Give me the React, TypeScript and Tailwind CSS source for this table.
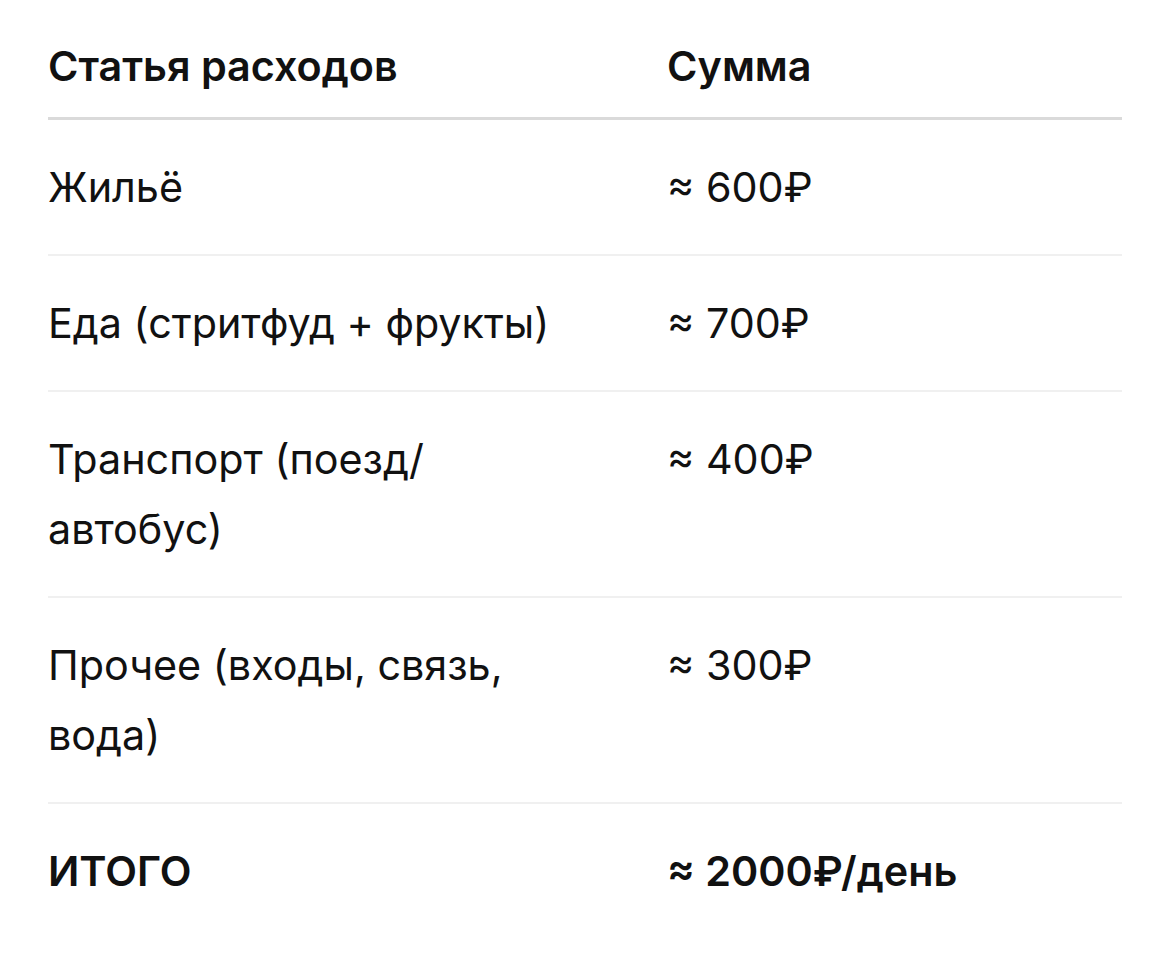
import { Fragment } from 'react';

const rows = [
  { item: 'Жильё', sum: '≈ 600₽' },
  { item: 'Еда (стритфуд + фрукты)', sum: '≈ 700₽' },
  { item: 'Транспорт (поезд/автобус)', sum: '≈ 400₽' },
  { item: 'Прочее (входы, связь, вода)', sum: '≈ 300₽' },
];

// allow a line break after a slash, the way the reference wraps "поезд/"
function withBreaks(text: string) {
  const parts = text.split('/');
  return parts.map((part, i) => (
    <Fragment key={i}>
      {part}
      {i < parts.length - 1 && (
        <>
          /<wbr />
        </>
      )}
    </Fragment>
  ));
}

export default function App() {
  return (
    <div className="min-h-[958px] bg-white px-[48px] pt-[16px] text-[#111111] font-['Inter','Noto_Sans',sans-serif] text-[41.3px] leading-[70px]">
      <div className="w-[1074px]">
        {/* Header */}
        <div className="grid grid-cols-[619px_1fr] border-b-[3px] border-[#dadada] pt-[15px] pb-[16px] font-semibold">
          <div className="pr-[80px]">Статья расходов</div>
          <div>Сумма</div>
        </div>

        {/* Rows */}
        {rows.map((row) => (
          <div
            key={row.item}
            className="grid grid-cols-[619px_1fr] border-b-[2px] border-[#f0f0f0] py-[32px]"
          >
            <div className="pr-[80px]">{withBreaks(row.item)}</div>
            <div>{row.sum}</div>
          </div>
        ))}

        {/* Total */}
        <div className="grid grid-cols-[619px_1fr] py-[32px] font-semibold">
          <div className="pr-[80px]">ИТОГО</div>
          <div>≈ 2000₽/день</div>
        </div>
      </div>
    </div>
  );
}
